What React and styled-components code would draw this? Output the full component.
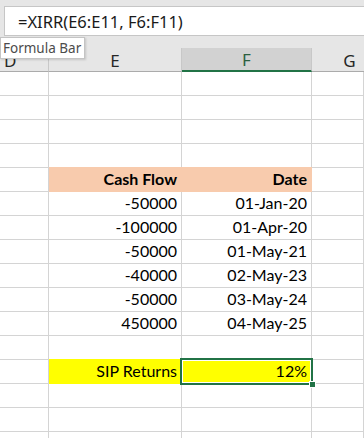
import React from "react";
import styled, { createGlobalStyle } from "styled-components";

const GlobalStyle = createGlobalStyle`
  body {
    margin: 0;
    background: #ffffff;
  }
`;

const rows = [
  {},
  {},
  {},
  {},
  { e: "Cash Flow", f: "Date", fill: "#f8cbad", bold: true },
  { e: "-50000", f: "01-Jan-20" },
  { e: "-100000", f: "01-Apr-20" },
  { e: "-50000", f: "01-May-21" },
  { e: "-40000", f: "02-May-23" },
  { e: "-50000", f: "03-May-24" },
  { e: "450000", f: "04-May-25" },
  {},
  { e: "SIP Returns", f: "12%", fill: "#ffff00", selected: true },
  {},
  {},
  {},
];

const Page = styled.div`
  position: relative;
  width: 364px;
  height: 438px;
  overflow: hidden;
  background: #ffffff;
`;

const FormulaArea = styled.div`
  background: #e6e6e6;
  height: 48px;
  padding: 6px 0 0 4px;
  box-sizing: border-box;
`;

const FormulaInput = styled.div`
  height: 30px;
  box-sizing: border-box;
  background: #ffffff;
  border: 1px solid #c6c6c6;
  border-right: none;
  padding-left: 13px;
  display: flex;
  align-items: center;
  font-family: "Noto Sans", "Open Sans", sans-serif;
  font-size: 16.5px;
  color: #1a1a1a;
`;

const Tooltip = styled.div`
  position: absolute;
  left: 0;
  top: 37px;
  height: 22px;
  padding: 0 3px 0 2px;
  box-sizing: border-box;
  background: #ffffff;
  border: 1px solid #c4c4c4;
  box-shadow: 1px 1px 2px rgba(0, 0, 0, 0.15);
  display: flex;
  align-items: center;
  font-family: "Noto Sans", "Open Sans", sans-serif;
  font-size: 13.5px;
  color: #4c4c4c;
  z-index: 3;
`;

const Row = styled.div`
  display: grid;
  grid-template-columns: 49px 133px 130px 1fr;
  height: 24px;
`;

const HeaderRow = styled(Row)`
  background: #e6e6e6;
  width: 440px;
  grid-template-columns: 49px 133px 130px 76px;
`;

const HeaderCell = styled.div`
  box-sizing: border-box;
  border-right: 1px solid #c8c8c8;
  border-bottom: ${(p) => (p.$active ? "2px solid #217346" : "1px solid #ababab")};
  background: ${(p) => (p.$active ? "#d2d2d2" : "transparent")};
  display: flex;
  align-items: center;
  justify-content: ${(p) => (p.$align === "left" ? "flex-start" : "center")};
  padding-left: ${(p) => (p.$align === "left" ? "4px" : "0")};
  padding-top: 1px;
  font-family: "Noto Sans", "Open Sans", sans-serif;
  font-size: 17px;
  color: ${(p) => (p.$active ? "#2b5f40" : "#262626")};
  overflow: hidden;
`;

const Cell = styled.div`
  position: relative;
  box-sizing: border-box;
  border-right: 1px solid ${(p) => p.$fill || "#d4d4d4"};
  border-bottom: 1px solid ${(p) => p.$fill || "#d4d4d4"};
  background: ${(p) => p.$fill || "#ffffff"};
  box-shadow: ${(p) => (p.$fill ? `0 -1px 0 ${p.$fill}` : "none")};
  display: flex;
  align-items: flex-end;
  justify-content: flex-end;
  padding: 0 4px 3px 0;
  font-family: Lato, "Liberation Sans", sans-serif;
  font-size: 16px;
  font-weight: ${(p) => (p.$bold ? 700 : 400)};
  color: #000000;
  white-space: nowrap;
`;

const Selection = styled.div`
  position: absolute;
  left: -2px;
  top: -2px;
  right: -2px;
  bottom: -2px;
  border: 2px solid #217346;
  box-shadow: inset 0 0 0 1px #ffffff;
  pointer-events: none;
  z-index: 2;
`;

const FillHandle = styled.div`
  position: absolute;
  right: -5px;
  bottom: -5px;
  width: 5px;
  height: 5px;
  background: #217346;
  border: 1px solid #ffffff;
`;

export default function App() {
  return (
    <Page>
      <GlobalStyle />
      <FormulaArea>
        <FormulaInput>=XIRR(E6:E11, F6:F11)</FormulaInput>
      </FormulaArea>
      <Tooltip>Formula Bar</Tooltip>
      <HeaderRow>
        <HeaderCell $align="left">D</HeaderCell>
        <HeaderCell>E</HeaderCell>
        <HeaderCell $active>F</HeaderCell>
        <HeaderCell>G</HeaderCell>
      </HeaderRow>
      {rows.map((r, i) => (
        <Row key={i}>
          <Cell />
          <Cell $fill={r.fill} $bold={r.bold}>
            {r.e}
          </Cell>
          <Cell $fill={r.fill} $bold={r.bold}>
            {r.f}
            {r.selected && (
              <Selection>
                <FillHandle />
              </Selection>
            )}
          </Cell>
          <Cell />
        </Row>
      ))}
    </Page>
  );
}
